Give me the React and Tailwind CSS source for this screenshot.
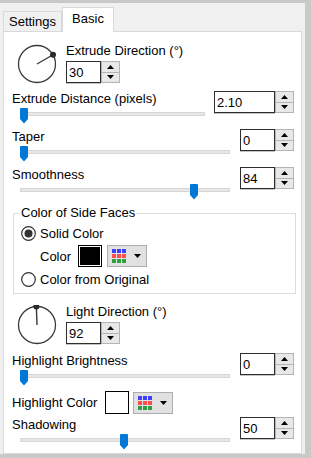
import React from "react";

const Dial = ({ angle }) => {
  const r = 18.5;
  const a = (angle * Math.PI) / 180;
  const x = 20 + Math.cos(a) * r;
  const y = 20 - Math.sin(a) * r;
  return (
    <svg width="40" height="40" viewBox="0 0 40 40" className="shrink-0">
      <circle cx="20" cy="20" r={r} fill="none" stroke="#3a3a3a" strokeWidth="1.3" />
      <line x1="20" y1="20" x2={x} y2={y} stroke="#3a3a3a" strokeWidth="1.4" />
      <circle cx={x} cy={y} r="3" fill="#2a2a2a" />
    </svg>
  );
};

const Tri = ({ up }) => (
  <svg width="7" height="4" viewBox="0 0 7 4">
    <path d={up ? "M0 4L3.5 0L7 4Z" : "M0 0L7 0L3.5 4Z"} fill="#000" />
  </svg>
);

const Spin = ({ value, wide }) => (
  <div className="flex h-[22px] shrink-0">
    <div
      className={`${wide ? "w-[61px]" : "w-[35px]"} flex items-center border border-[#2e2e2e] bg-white pl-[2px] text-[13px] leading-[15px] shadow-[0_1px_0_#c4c4c4]`}
    >
      {value}
    </div>
    <div className="flex w-[19px] flex-col border border-[#b4b4b4] bg-[#e8e8e8]">
      <div className="flex flex-1 items-center justify-center">
        <Tri up />
      </div>
      <div className="flex flex-1 items-center justify-center border-t border-[#b4b4b4]">
        <Tri />
      </div>
    </div>
  </div>
);

const Slider = ({ long, pos }) => (
  <div className={`relative ml-[8px] mt-[2px] h-[16px] ${long ? "w-[210px]" : "w-[185px]"}`}>
    <div className="absolute left-0 right-0 top-[4px] h-[4px] border border-[#d6d6d6] bg-[#e7e7e7]" />
    <svg width="8" height="16" viewBox="0 0 8 16" className="absolute top-0" style={{ left: pos }}>
      <path d="M1 0H7a1 1 0 0 1 1 1v10l-4 4.5-4-4.5V1a1 1 0 0 1 1-1z" fill="#0078d7" />
    </svg>
  </div>
);

const SliderRow = ({ label, value, pos, narrowSpin, className }) => (
  <div className={`flex pl-[8px] pr-[7px] ${className}`}>
    <div className="flex flex-1 flex-col">
      <div className="h-[15px] text-[13px] leading-[15px]">{label}</div>
      <Slider long={narrowSpin} pos={pos} />
    </div>
    <Spin value={value} wide={!narrowSpin} />
  </div>
);

const Grid = () => (
  <svg width="14" height="14" viewBox="0 0 14 14">
    {[0, 1, 2].map((r) =>
      [0, 1, 2].map((c) => (
        <rect
          key={`${r}-${c}`}
          x={c * 5}
          y={r * 5}
          width="4"
          height="4"
          fill={r === 0 ? "#3f3fff" : r === 1 ? "#ff4c4c" : "#2f9f3f"}
        />
      ))
    )}
  </svg>
);

const ColorDrop = ({ className }) => (
  <div className={`flex h-[22px] w-[40px] items-center gap-[8px] border border-[#adadad] bg-[#e1e1e1] pl-[4px] ${className}`}>
    <Grid />
    <Tri />
  </div>
);

const Radio = ({ checked }) => (
  <svg width="15" height="15" viewBox="0 0 15 15" className="shrink-0">
    <circle cx="7.5" cy="7.5" r="6.8" fill="#fff" stroke="#333" strokeWidth="1.2" />
    {checked && <circle cx="7.5" cy="7.5" r="4" fill="#333" />}
  </svg>
);

export default function App() {
  return (
    <div className="h-[458px] w-[311px] bg-[#c9c9c9] pt-[3px] font-['Liberation_Sans',Arial,sans-serif] text-[#000]">
      <div className="flex h-[451px] w-[305px] flex-col bg-[#f0f0f0]">
        <div className="flex h-[28px] items-end pl-[3px]">
          <div className="flex h-[20px] w-[59px] items-center justify-center border border-b-0 border-[#d9d9d9] text-[13px] leading-[15px]">
            Settings
          </div>
          <div className="relative z-10 mb-[-1px] flex h-[25px] w-[52px] justify-center border border-b-0 border-[#d9d9d9] bg-white pt-[3px] text-[13px] leading-[15px]">
            Basic
          </div>
        </div>

        <div className="ml-[3px] flex h-[423px] w-[299px] flex-col border border-[#d9d9d9] bg-white">
          <div className="ml-[13px] mt-[11px] flex items-start">
            <div className="mt-[1px]">
              <Dial angle={30} />
            </div>
            <div className="ml-[9px] flex flex-col">
              <div className="h-[15px] text-[13px] leading-[15px]">Extrude Direction (°)</div>
              <div className="mt-[3px]">
                <Spin value="30" />
              </div>
            </div>
          </div>

          <SliderRow className="mt-[7px]" label="Extrude Distance (pixels)" value="2.10" pos={0} />
          <SliderRow className="mt-[5px]" label="Taper" value="0" pos={0} narrowSpin />
          <SliderRow className="mt-[5px]" label="Smoothness" value="84" pos={170} narrowSpin />

          <div className="relative ml-[9px] mt-[13px] w-[283px] border border-[#dcdcdc] pb-[6px]">
            <div className="absolute left-[6px] top-[-9px] bg-white px-[1px] text-[13px] leading-[15px]">
              Color of Side Faces
            </div>
            <div className="ml-[7px] mt-[12px] flex h-[15px] items-center">
              <Radio checked />
              <span className="ml-[4px] text-[13px] leading-[15px]">Solid Color</span>
            </div>
            <div className="ml-[26px] mt-[4px] flex h-[22px] items-center">
              <span className="text-[13px] leading-[15px]">Color</span>
              <div className="ml-[7px] h-[22px] w-[24px] border border-black bg-white p-[1px]">
                <div className="h-full w-full bg-black" />
              </div>
              <ColorDrop className="ml-[5px]" />
            </div>
            <div className="ml-[7px] mt-[5px] flex h-[15px] items-center">
              <Radio />
              <span className="ml-[4px] text-[13px] leading-[15px]">Color from Original</span>
            </div>
          </div>

          <div className="ml-[13px] mt-[10px] flex items-start">
            <div className="mt-[1px]">
              <Dial angle={92} />
            </div>
            <div className="ml-[9px] flex flex-col">
              <div className="h-[15px] text-[13px] leading-[15px]">Light Direction (°)</div>
              <div className="mt-[3px]">
                <Spin value="92" />
              </div>
            </div>
          </div>

          <SliderRow className="mt-[8px]" label="Highlight Brightness" value="0" pos={0} narrowSpin />

          <div className="ml-[8px] mt-[5px] flex h-[23px] items-center">
            <span className="text-[13px] leading-[15px]">Highlight Color</span>
            <div className="ml-[8px] h-[23px] w-[24px] border border-black bg-white" />
            <ColorDrop className="ml-[4px]" />
          </div>

          <SliderRow className="mt-[3px]" label="Shadowing" value="50" pos={100} narrowSpin />
        </div>
      </div>
    </div>
  );
}
